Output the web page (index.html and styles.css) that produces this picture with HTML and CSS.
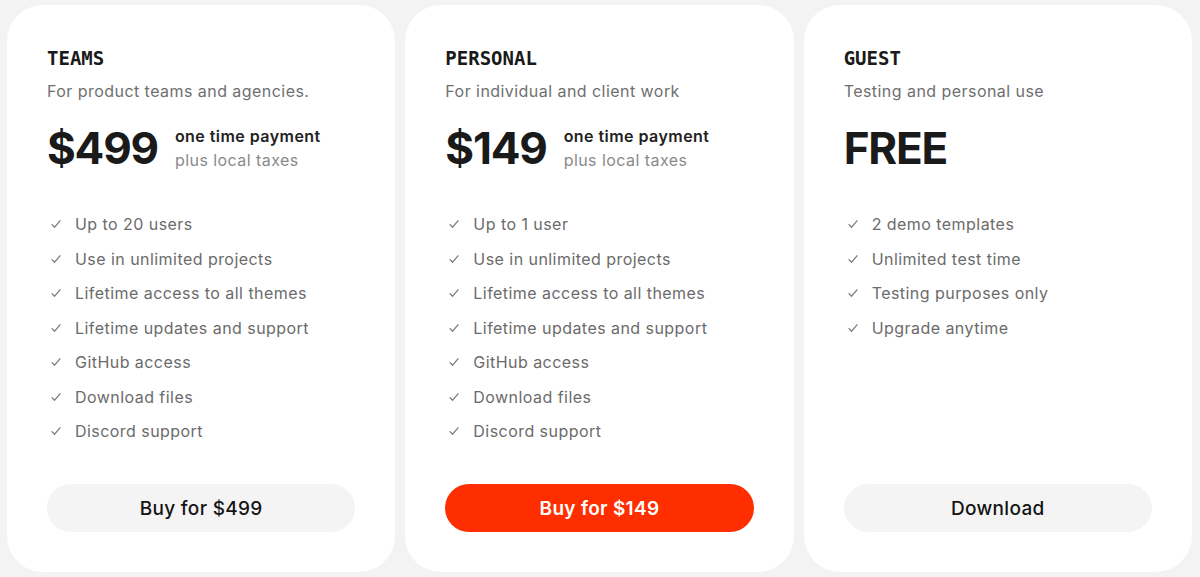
FILE: index.html
```html
<!DOCTYPE html>
<html lang="en">
<head>
<meta charset="utf-8">
<title>Pricing</title>
<link rel="stylesheet" href="styles.css">
</head>
<body>
<div class="plans">
  <section class="card">
    <h2 class="plan-name">TEAMS</h2>
    <p class="plan-desc">For product teams and agencies.</p>
    <div class="price-row">
      <span class="price">$499</span>
      <div class="price-note">
        <span class="note-main">one time payment</span>
        <span class="note-sub">plus local taxes</span>
      </div>
    </div>
    <ul class="features">
      <li><svg class="check" viewBox="0 0 12 12"><path d="M2 6.6 L4.6 9.2 L10 2.8"/></svg>Up to 20 users</li>
      <li><svg class="check" viewBox="0 0 12 12"><path d="M2 6.6 L4.6 9.2 L10 2.8"/></svg>Use in unlimited projects</li>
      <li><svg class="check" viewBox="0 0 12 12"><path d="M2 6.6 L4.6 9.2 L10 2.8"/></svg>Lifetime access to all themes</li>
      <li><svg class="check" viewBox="0 0 12 12"><path d="M2 6.6 L4.6 9.2 L10 2.8"/></svg>Lifetime updates and support</li>
      <li><svg class="check" viewBox="0 0 12 12"><path d="M2 6.6 L4.6 9.2 L10 2.8"/></svg>GitHub access</li>
      <li><svg class="check" viewBox="0 0 12 12"><path d="M2 6.6 L4.6 9.2 L10 2.8"/></svg>Download files</li>
      <li><svg class="check" viewBox="0 0 12 12"><path d="M2 6.6 L4.6 9.2 L10 2.8"/></svg>Discord support</li>
    </ul>
    <button class="btn">Buy for $499</button>
  </section>
  <section class="card">
    <h2 class="plan-name">PERSONAL</h2>
    <p class="plan-desc">For individual and client work</p>
    <div class="price-row">
      <span class="price">$149</span>
      <div class="price-note">
        <span class="note-main">one time payment</span>
        <span class="note-sub">plus local taxes</span>
      </div>
    </div>
    <ul class="features">
      <li><svg class="check" viewBox="0 0 12 12"><path d="M2 6.6 L4.6 9.2 L10 2.8"/></svg>Up to 1 user</li>
      <li><svg class="check" viewBox="0 0 12 12"><path d="M2 6.6 L4.6 9.2 L10 2.8"/></svg>Use in unlimited projects</li>
      <li><svg class="check" viewBox="0 0 12 12"><path d="M2 6.6 L4.6 9.2 L10 2.8"/></svg>Lifetime access to all themes</li>
      <li><svg class="check" viewBox="0 0 12 12"><path d="M2 6.6 L4.6 9.2 L10 2.8"/></svg>Lifetime updates and support</li>
      <li><svg class="check" viewBox="0 0 12 12"><path d="M2 6.6 L4.6 9.2 L10 2.8"/></svg>GitHub access</li>
      <li><svg class="check" viewBox="0 0 12 12"><path d="M2 6.6 L4.6 9.2 L10 2.8"/></svg>Download files</li>
      <li><svg class="check" viewBox="0 0 12 12"><path d="M2 6.6 L4.6 9.2 L10 2.8"/></svg>Discord support</li>
    </ul>
    <button class="btn btn-primary">Buy for $149</button>
  </section>
  <section class="card">
    <h2 class="plan-name">GUEST</h2>
    <p class="plan-desc">Testing and personal use</p>
    <div class="price-row">
      <span class="price">FREE</span>
    </div>
    <ul class="features">
      <li><svg class="check" viewBox="0 0 12 12"><path d="M2 6.6 L4.6 9.2 L10 2.8"/></svg>2 demo templates</li>
      <li><svg class="check" viewBox="0 0 12 12"><path d="M2 6.6 L4.6 9.2 L10 2.8"/></svg>Unlimited test time</li>
      <li><svg class="check" viewBox="0 0 12 12"><path d="M2 6.6 L4.6 9.2 L10 2.8"/></svg>Testing purposes only</li>
      <li><svg class="check" viewBox="0 0 12 12"><path d="M2 6.6 L4.6 9.2 L10 2.8"/></svg>Upgrade anytime</li>
    </ul>
    <button class="btn">Download</button>
  </section>
</div>
</body>
</html>
```

FILE: styles.css
```css
* { box-sizing: border-box; }
html, body { margin: 0; padding: 0; }
body {
  background: #f3f3f3;
  font-family: Inter, "Noto Sans", sans-serif;
  color: #1a1a1a;
  height: 577px;
  overflow: hidden;
}
.plans {
  display: flex;
  gap: 10px;
  padding: 5px 8px 5px 7px;
  height: 577px;
}
.card {
  flex: 1;
  background: #fff;
  border-radius: 36px;
  padding: 41px 40px 40px;
  display: flex;
  flex-direction: column;
}
.plan-name {
  margin: 0;
  font-family: "DejaVu Sans Mono", "Liberation Mono", monospace;
  font-weight: 700;
  font-size: 19px;
  line-height: 24px;
  letter-spacing: 0;
  color: #1a1a1a;
}
.plan-desc {
  margin: 9px 0 0;
  font-size: 16px;
  line-height: 24px;
  letter-spacing: 0.45px;
  color: #6f6f6f;
}
.price-row {
  margin-top: 21px;
  display: flex;
  align-items: center;
  gap: 17px;
  height: 48px;
}
.price {
  font-size: 44px;
  line-height: 48px;
  font-weight: 700;
  letter-spacing: -1.2px;
  color: #1a1a1a;
}
.price-note {
  display: flex;
  flex-direction: column;
  font-size: 16px;
  line-height: 24px;
  letter-spacing: 0.45px;
}
.note-main { font-weight: 600; color: #222; }
.note-sub { color: #8a8a8a; }
.features {
  list-style: none;
  margin: 40px 0 0;
  padding: 0;
  display: flex;
  flex-direction: column;
  gap: 10.5px;
}
.features li {
  display: flex;
  align-items: center;
  font-size: 16px;
  line-height: 24px;
  letter-spacing: 0.45px;
  color: #6b6b6b;
}
.check {
  width: 12px;
  height: 12px;
  margin: 0 13px 0 3px;
  fill: none;
  stroke: #7a7a7a;
  stroke-width: 1.3;
  stroke-linecap: round;
  stroke-linejoin: round;
  flex: none;
}
.btn {
  margin-top: auto;
  height: 48px;
  width: 100%;
  border: none;
  border-radius: 24px;
  background: #f4f4f4;
  font-family: Inter, "Noto Sans", sans-serif;
  font-size: 19px;
  font-weight: 500;
  letter-spacing: 0.3px;
  color: #141414;
  cursor: pointer;
}
.btn-primary {
  background: #ff2e00;
  color: #fff;
  font-weight: 600;
}
```
